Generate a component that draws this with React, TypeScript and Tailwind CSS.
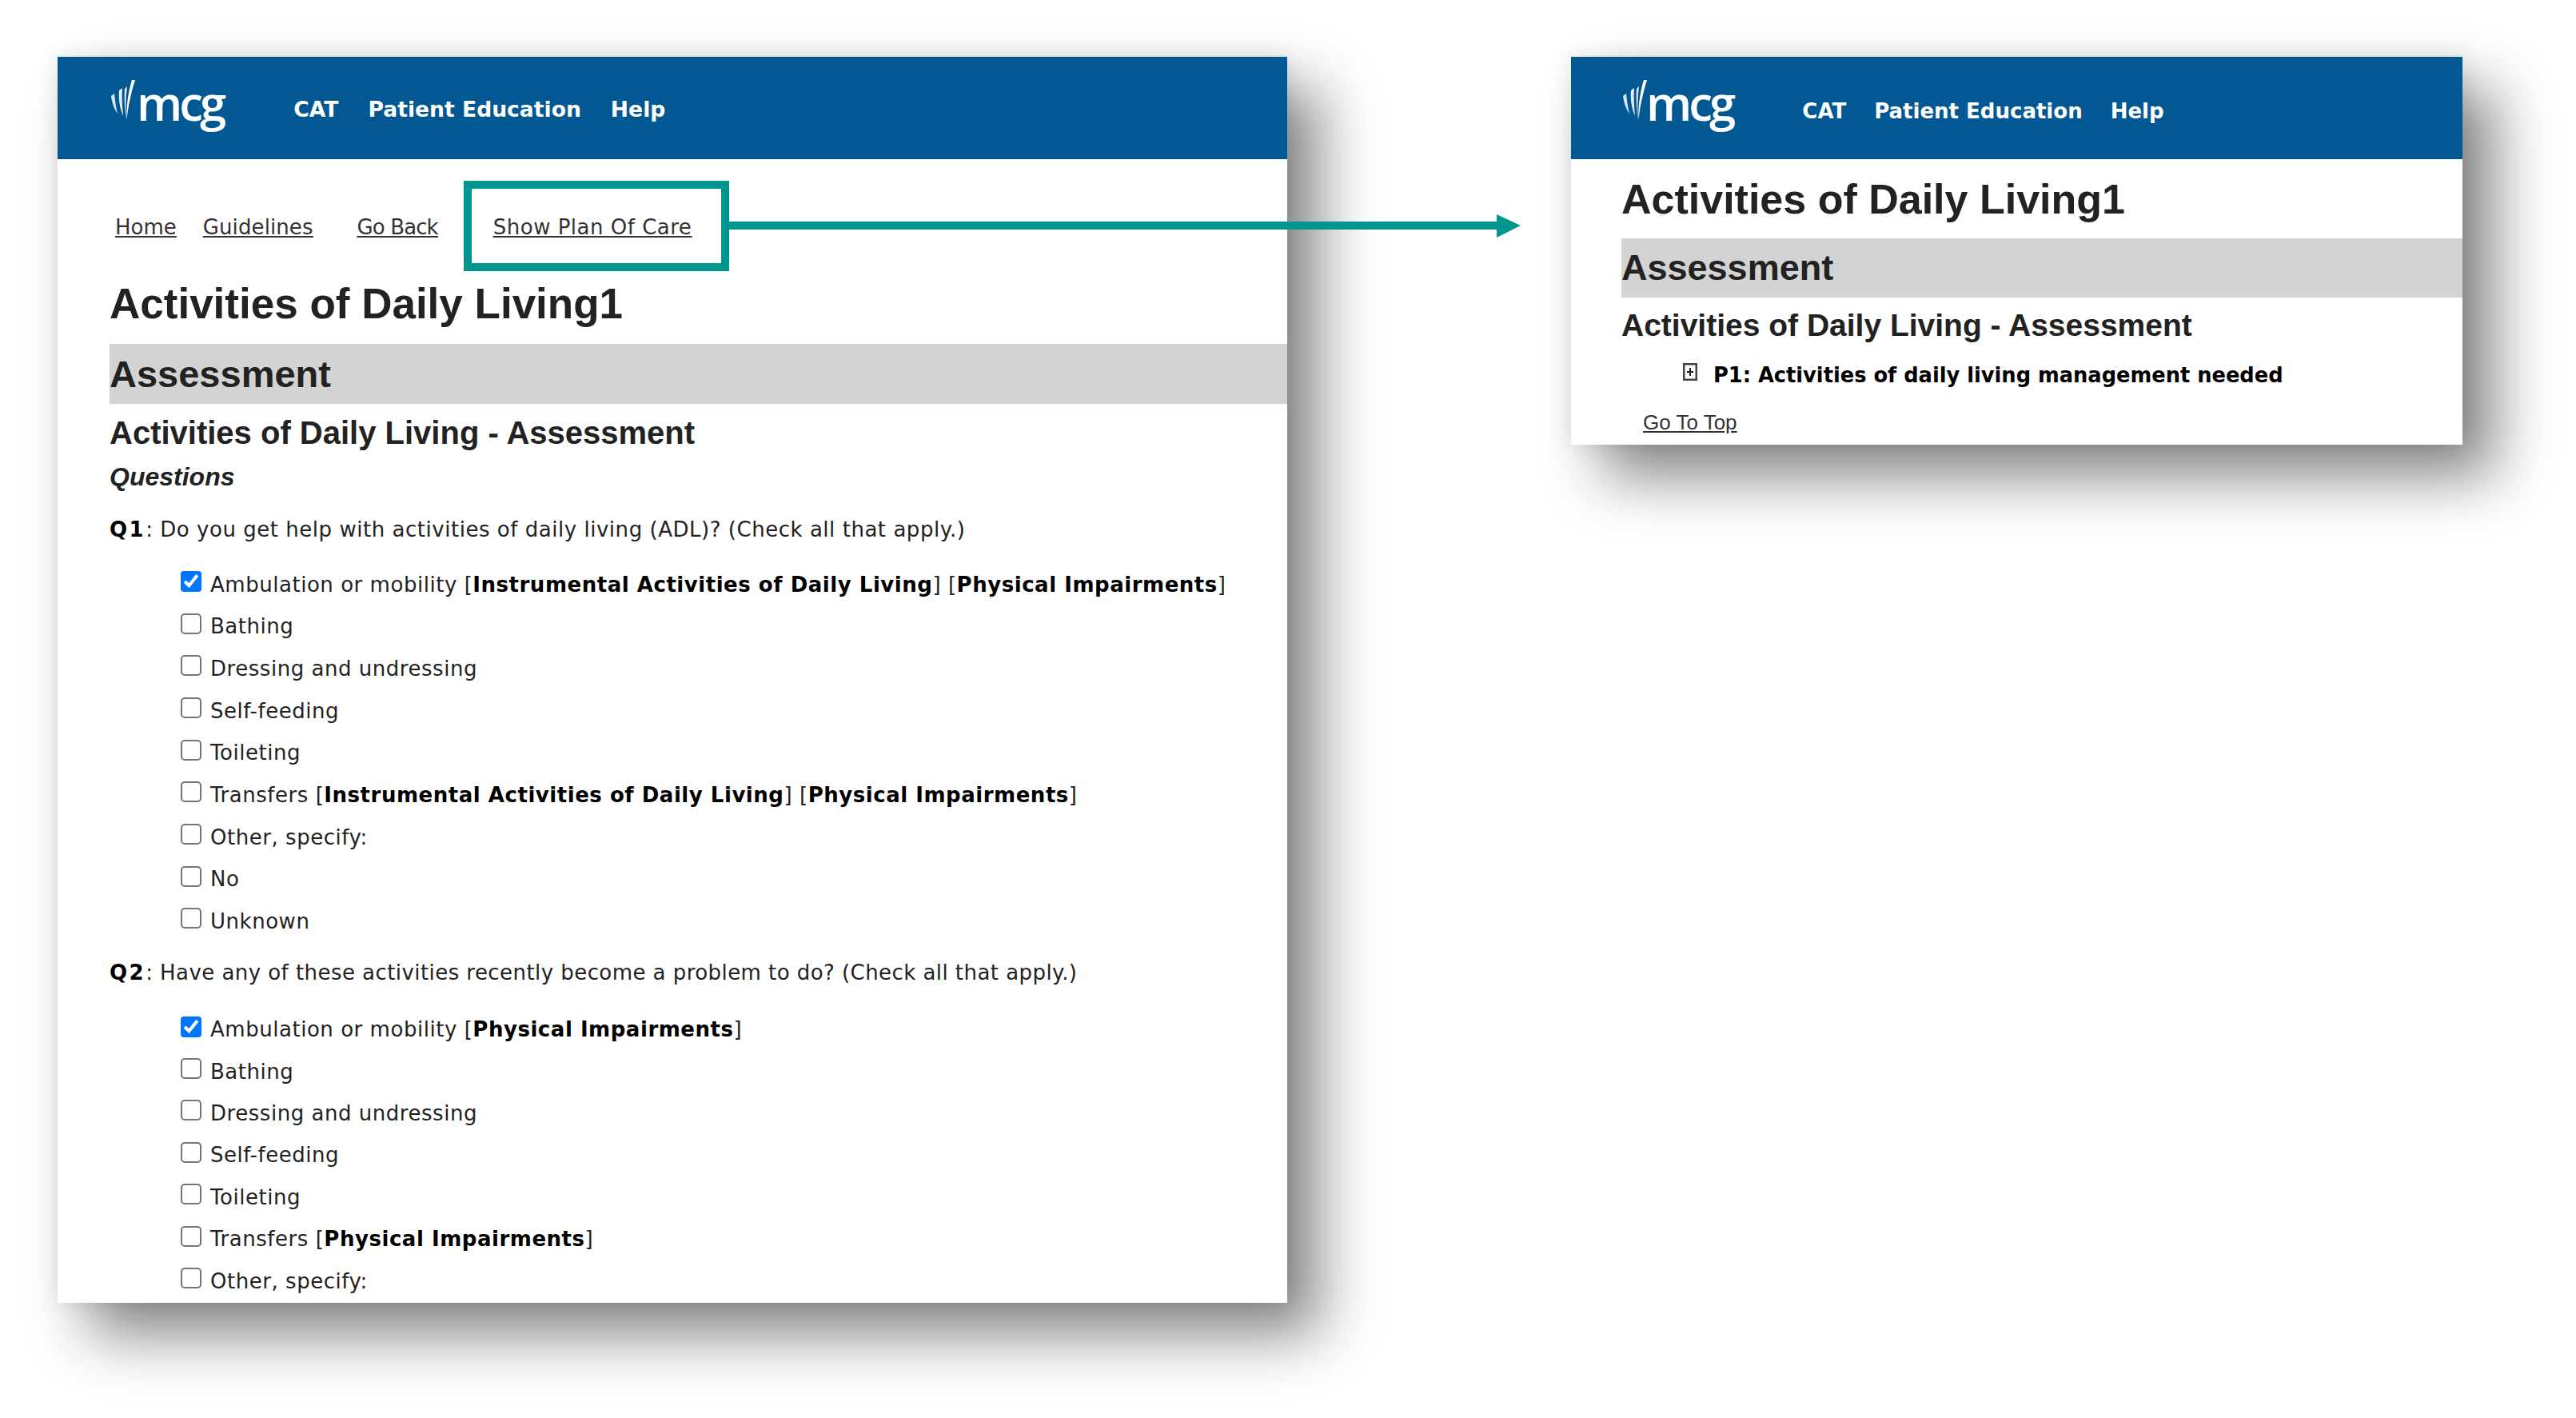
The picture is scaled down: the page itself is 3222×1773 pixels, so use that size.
const Mark = () => (
  <svg viewBox="0 0 30 50" className="w-[30px] h-[50px] shrink-0 mb-[20px]" fill="#fff">
    <path d="M0 20 L4 17 C5 26 6 35 8 42 C4 37 1 28 0 20 Z" opacity="0.85" />
    <path d="M10 13 L14 10 C13 22 14 34 15 45 C11 36 9 24 10 13 Z" opacity="0.9" />
    <path d="M17 11 L20 8 C18 22 18 36 19 50 C17 37 16 24 17 11 Z" opacity="0.9" />
    <path d="M26 0 L30 0 C25 16 21 34 19.5 50 C19 34 21 16 26 0 Z" />
  </svg>
);

const Header = ({ logoPad, logoShift, navClass }: { logoPad: string; logoShift: string; navClass: string }) => (
  <div className={`h-[128px] bg-[#025892] flex items-center text-white font-['DejaVu_Sans',sans-serif] ${logoPad}`}>
    <Mark />
    <span className={`font-['Open_Sans',sans-serif] font-semibold text-[60px] leading-none tracking-[-4px] mb-[14px] ${logoShift}`}>mcg</span>
    <nav className={`flex font-bold ${navClass}`}>
      <span>CAT</span>
      <span>Patient Education</span>
      <span>Help</span>
    </nav>
  </div>
);

const Row = ({ checked, children }: { checked?: boolean; children: React.ReactNode }) => (
  <label className="h-[52.4px] flex items-center pl-[89px]">
    <input type="checkbox" defaultChecked={checked} className="w-[13px] h-[13px] m-0 mb-[4px] shrink-0 [zoom:2]" />
    <span className="ml-[11px]">{children}</span>
  </label>
);

const B = ({ children }: { children: React.ReactNode }) => <b className="font-bold text-black">{children}</b>;

export default function App() {
  return (
    <div className="w-[3222px] h-[1773px] bg-white overflow-hidden relative flex items-start pt-[71px] pl-[72px] font-['DejaVu_Sans',sans-serif] text-[#222]">
      <section className="relative w-[1538px] h-[1558px] bg-white overflow-hidden shrink-0 shadow-[40px_40px_70px_rgba(0,0,0,0.48),0_0_25px_rgba(0,0,0,0.1)]">
        <Header logoPad="pl-[67px]" logoShift="ml-[2px]" navClass="ml-[88px] mt-[4px] gap-[37px] text-[26.6px]" />
        <div className="h-[149px] pt-[70px] pl-[72px] flex gap-[33px] text-[26px] leading-[30px] text-[#333] underline">
          <a>Home</a>
          <a className="tracking-[0.1px]">Guidelines</a>
          <a className="ml-[22px] tracking-[-0.9px]">Go Back</a>
          <a className="ml-[36px] tracking-[0.5px]">Show Plan Of Care</a>
        </div>
        <div className="pl-[65px] font-['Liberation_Sans',sans-serif] font-bold">
          <h1 className="mt-[2px] text-[53px] leading-[60px] h-[60px]">Activities of Daily Living1</h1>
          <h2 className="mt-[20px] h-[75px] bg-[#d3d3d3] text-[47px] leading-[75px]">Assessment</h2>
          <h3 className="mt-[11px] h-[50px] text-[40px] leading-[50px]">Activities of Daily Living - Assessment</h3>
          <h4 className="mt-[10px] h-[40px] text-[32px] leading-[40px] italic">Questions</h4>
        </div>
        <div className="text-[26px] tracking-[0.53px] pl-[65px]">
          <p className="mt-[26px] h-[40px] leading-[40px]"><span className="tracking-[2.5px]"><B>Q1</B></span>: Do you get help with activities of daily living (ADL)? (Check all that apply.)</p>
          <div className="mt-[23px] flex flex-col gap-[0.25px]">
            <Row checked>Ambulation or mobility [<B>Instrumental Activities of Daily Living</B>] [<B>Physical Impairments</B>]</Row>
            <Row>Bathing</Row>
            <Row>Dressing and undressing</Row>
            <Row>Self-feeding</Row>
            <Row>Toileting</Row>
            <Row>Transfers [<B>Instrumental Activities of Daily Living</B>] [<B>Physical Impairments</B>]</Row>
            <Row>Other, specify:</Row>
            <Row>No</Row>
            <Row>Unknown</Row>
          </div>
          <p className="mt-[17px] h-[40px] leading-[40px] tracking-[0.44px]"><span className="tracking-[2.5px]"><B>Q2</B></span>: Have any of these activities recently become a problem to do? (Check all that apply.)</p>
          <div className="mt-[26px]">
            <Row checked>Ambulation or mobility [<B>Physical Impairments</B>]</Row>
            <Row>Bathing</Row>
            <Row>Dressing and undressing</Row>
            <Row>Self-feeding</Row>
            <Row>Toileting</Row>
            <Row>Transfers [<B>Physical Impairments</B>]</Row>
            <Row>Other, specify:</Row>
          </div>
        </div>
        <div className="absolute left-[508px] top-[155px] w-[332px] h-[113px] border-[10px] border-[#00968f]" />
      </section>

      <section className="w-[1115px] h-[485px] ml-[355px] bg-white shrink-0 shadow-[40px_40px_70px_rgba(0,0,0,0.48),0_0_25px_rgba(0,0,0,0.1)]">
        <Header logoPad="pl-[65px]" logoShift="-ml-[1px]" navClass="ml-[87px] mt-[8px] gap-[35px] text-[26px]" />
        <div className="pl-[63px] font-['Liberation_Sans',sans-serif] font-bold">
          <h1 className="pt-[20px] text-[52px] leading-[60px] h-[80px]">Activities of Daily Living1</h1>
          <h2 className="mt-[19px] h-[74px] bg-[#d3d3d3] text-[45px] leading-[74px]">Assessment</h2>
          <h3 className="mt-[10px] h-[50px] text-[39px] leading-[50px]">Activities of Daily Living - Assessment</h3>
        </div>
        <div className="mt-[17px] h-[40px] flex items-center pl-[140px]">
          <svg viewBox="0 0 18 22" className="w-[18px] h-[22px] shrink-0 mb-[8px]">
            <rect x="1.25" y="1.25" width="15.5" height="19.5" fill="#fff" stroke="#444" strokeWidth="2.5" />
            <path d="M5 11h8M9 6v10" stroke="#222" strokeWidth="2" />
          </svg>
          <span className="ml-[20px] text-[25.7px] font-bold text-black">P1: Activities of daily living management needed</span>
        </div>
        <a className="block mt-[24px] ml-[90px] font-['Liberation_Sans',sans-serif] text-[26px] leading-[30px] text-[#333] underline">Go To Top</a>
      </section>

      <svg className="absolute left-[912px] top-[260px] w-[1000px] h-[46px]" viewBox="0 0 1000 46">
        <rect x="0" y="17" width="961" height="10" fill="#00968f" />
        <polygon points="960,8 990,22 960,37" fill="#00968f" />
      </svg>
    </div>
  );
}
